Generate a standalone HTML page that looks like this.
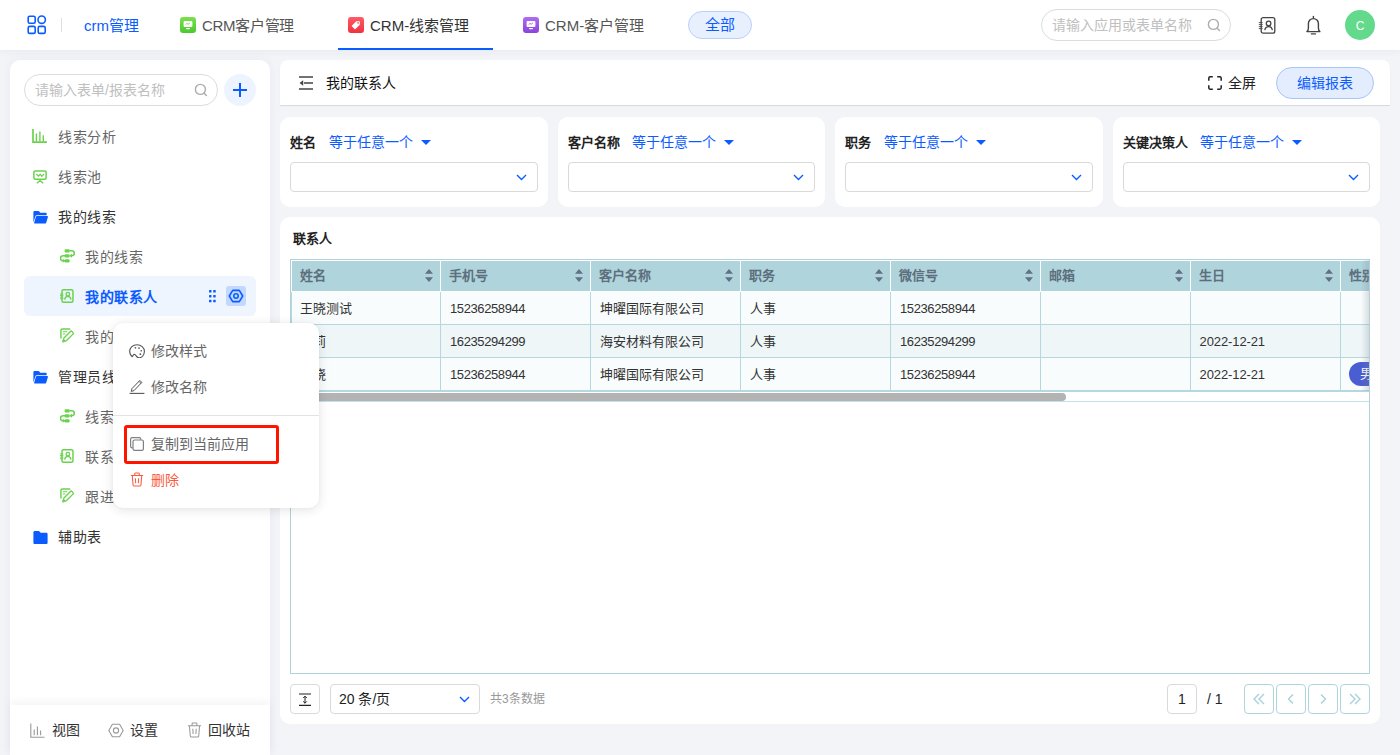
<!DOCTYPE html>
<html lang="zh-CN">
<head>
<meta charset="utf-8">
<title>CRM-线索管理</title>
<style>
*{box-sizing:border-box;margin:0;padding:0}
html,body{width:1400px;height:755px;overflow:hidden}
body{font-family:"Liberation Sans",sans-serif;font-size:14px;color:#333;background:#f2f4f8;position:relative}
.abs{position:absolute}
svg{display:block}
/* ---------- top bar ---------- */
#topbar{position:absolute;left:0;top:0;width:1400px;height:50px;background:#fff;box-shadow:0 1px 8px rgba(40,50,90,.06)}
#topbar .t{position:absolute;top:0;height:50px;line-height:51px;font-size:15px;white-space:nowrap}
.appico{position:absolute;top:17px;width:16px;height:16px;border-radius:3px}
/* ---------- sidebar ---------- */
#side{position:absolute;left:10px;top:60px;width:260px;height:695px;background:#fff;border-radius:10px 10px 0 0;box-shadow:0 0 10px rgba(60,70,120,.06)}
.nav{position:absolute;left:0;height:40px;line-height:40px;font-size:14px;letter-spacing:.55px;color:#666;white-space:nowrap}
.nav svg{position:absolute}
/* ---------- main ---------- */
.card{position:absolute;background:#fff;border-radius:10px}

/* header panel */
#hd{position:absolute;left:280px;top:60px;width:1110px;height:45px;background:#fff;border-radius:8px 8px 0 0;box-shadow:0 1px 1px rgba(0,0,0,.12)}
/* filter cards */
.fc{position:absolute;top:117px;width:267.500px;height:90px;background:#fff;border-radius:10px}
.fc .lb{position:absolute;left:10px;top:17px;height:18px;line-height:18px;font-size:13px;font-weight:bold;color:#222;white-space:nowrap}
.fc .op{position:absolute;top:16px;height:18px;line-height:18px;font-size:14px;color:#0b5cff;white-space:nowrap}
.fc .tri{position:absolute;top:23px;width:0;height:0;border-left:5px solid transparent;border-right:5px solid transparent;border-top:5.5px solid #0b5cff}
.fc .sel{position:absolute;left:10px;top:45px;width:247.500px;height:30px;border:1px solid #d9d9d9;border-radius:4px;background:#fff}
.fc .sel svg{position:absolute;right:10px;top:11px}
/* table */
#tp{position:absolute;left:280px;top:217px;width:1100px;height:507px;background:#fff;border-radius:10px;overflow:hidden}
#tw{position:absolute;left:10px;top:42px;width:1080px;height:415px;border:1px solid #afd2dc;overflow:hidden}
.th{position:absolute;top:1px;height:30px;width:149px;background:#afd4dc;color:#5d6f7c;font-size:13px;font-weight:bold;line-height:30px;padding-left:8px;white-space:nowrap}
.th svg{position:absolute;right:7px;top:8px}
.tr{position:absolute;left:0;width:1200px;height:33px;border-bottom:1px solid #b6d7df;border-left:1px solid #b6d7df}
.td{position:absolute;top:0;height:32px;width:150px;margin-left:-1px;border-right:1px solid #b6d7df;font-size:13px;color:#333;line-height:33px;padding-left:9px;white-space:nowrap;letter-spacing:-.4px}
.td.c{letter-spacing:0}
.pbtn{position:absolute;top:467px;width:30px;height:30px;border:1px solid #afd4dc;border-radius:4px;background:#fff}
.pbtn svg{position:absolute;left:7px;top:7px}
.pbtn.j svg{top:8px}

/* popup */
#pop{position:absolute;left:113px;top:323px;width:206px;height:185px;background:#fff;border-radius:10px;box-shadow:0 2px 12px rgba(0,0,0,.11),0 0 3px rgba(0,0,0,.04)}
#pop .mi{position:absolute;left:38px;height:36px;line-height:36px;font-size:14px;color:#666;white-space:nowrap}
#pop svg{position:absolute}
</style>
</head>
<body>


<!-- ================= TOP BAR ================= -->
<div id="topbar">
  <svg class="abs" style="left:27px;top:15px" width="20" height="20" viewBox="0 0 20 20" fill="none" stroke="#0b5cff" stroke-width="1.600">
    <rect x="1.200" y="1.200" width="7" height="7" rx="1.500"/><circle cx="14.700" cy="4.700" r="3.700"/>
    <rect x="1.200" y="11.400" width="7" height="7" rx="1.500"/><rect x="11.200" y="11.400" width="7" height="7" rx="1.500"/>
  </svg>
  <div class="abs" style="left:61px;top:18px;width:1px;height:14px;background:#dcdfe6"></div>
  <div class="t" style="left:84px;color:#0b5cff">crm管理</div>

  <div class="appico" style="left:180px;background:linear-gradient(180deg,#7be04e,#4cc92f)">
    <svg width="16" height="16" viewBox="0 0 16 16"><rect x="3.6" y="4" width="8.8" height="6" rx="1" fill="#fff"/><rect x="6" y="11" width="4" height="1.2" rx=".6" fill="#fff"/><path d="M5.6 7.6l1.4-1.2 1.2 .9 1.8-1.5" stroke="#5dd33a" stroke-width=".8" fill="none"/></svg>
  </div>
  <div class="t" style="left:202px;color:#555;letter-spacing:-.3px">CRM客户管理</div>

  <div class="appico" style="left:348px;background:linear-gradient(180deg,#ff5a66,#f0323f)">
    <svg width="16" height="16" viewBox="0 0 16 16"><path d="M8.3 4.2h3.5v3.5l-4.3 4.3a.7.7 0 0 1-1 0L4 9.5a.7.7 0 0 1 0-1z" fill="#fff"/><circle cx="10.1" cy="5.9" r=".8" fill="#f4404c"/></svg>
  </div>
  <div class="t" style="left:370px;color:#333">CRM-线索管理</div>
  <div class="abs" style="left:338px;top:48px;width:155px;height:2px;background:#0b5cff"></div>

  <div class="appico" style="left:523px;background:linear-gradient(180deg,#b06cf0,#8a43dd)">
    <svg width="16" height="16" viewBox="0 0 16 16"><rect x="3.6" y="4" width="8.8" height="6" rx="1" fill="#fff"/><rect x="6" y="11" width="4" height="1.2" rx=".6" fill="#fff"/><path d="M5.6 7.6l1.4-1.2 1.2 .9 1.8-1.5" stroke="#9a55e6" stroke-width=".8" fill="none"/></svg>
  </div>
  <div class="t" style="left:545px;color:#555">CRM-客户管理</div>

  <div class="abs" style="left:688px;top:11px;width:64px;height:28px;border-radius:14px;background:#e8f0fe;border:1px solid #b9d0fb;color:#0b5cff;font-size:15px;line-height:26px;text-align:center">全部</div>

  <div class="abs" style="left:1041px;top:9px;width:190px;height:32px;border-radius:16px;border:1px solid #dcdcdc;background:#fff;font-size:14px;line-height:30px;color:#c0c0c0;padding-left:10px;white-space:nowrap">请输入应用或表单名称</div>
  <svg class="abs" style="left:1206px;top:17px" width="16" height="16" viewBox="0 0 16 16" fill="none" stroke="#adadad" stroke-width="1.400"><circle cx="7.4" cy="7.4" r="5"/><path d="M11.2 11.2l2.2 2.2" stroke-linecap="round"/></svg>

  <svg class="abs" style="left:1258px;top:16px" width="19" height="19" viewBox="0 0 19 19" fill="none" stroke="#444" stroke-width="1.3"><rect x="3.2" y="1.6" width="13.6" height="15.6" rx="2"/><path d="M.8 6.600h3.800M.8 8.600h3.800M.8 10.600h3.800M.8 12.600h3.800" stroke-width=".9"/><circle cx="10.6" cy="7.4" r="2.3"/><path d="M6.8 14.2c.4-2.4 1.8-3.6 3.8-3.6s3.4 1.2 3.8 3.6"/></svg>

  <svg class="abs" style="left:1305px;top:15px" width="18" height="20" viewBox="0 0 18 20" fill="none" stroke="#444" stroke-width="1.400" stroke-linecap="round" stroke-linejoin="round"><path d="M8.400 1.500v1.200"/><path d="M1.900 16.600c1.200-.8 1.500-1.800 1.500-3.600V8.600a5 5 0 0 1 10 0V13c0 1.800 .3 2.800 1.500 3.600z"/><path d="M6.400 18.900h4"/></svg>

  <div class="abs" style="left:1345px;top:10px;width:30px;height:30px;border-radius:15px;background:#62d98b;color:#fff;font-size:12px;line-height:32px;text-align:center">C</div>
</div>

<!-- ================= SIDEBAR ================= -->
<div id="side">
  <div class="abs" style="left:14px;top:14px;width:194px;height:32px;border-radius:16px;border:1px solid #dcdcdc;font-size:14px;line-height:30px;color:#c0c0c0;padding-left:10px;white-space:nowrap">请输入表单/报表名称</div>
  <svg class="abs" style="left:183px;top:22px" width="16" height="16" viewBox="0 0 16 16" fill="none" stroke="#adadad" stroke-width="1.400"><circle cx="7.4" cy="7.4" r="5"/><path d="M11.2 11.2l2.2 2.2" stroke-linecap="round"/></svg>
  <div class="abs" style="left:214px;top:14px;width:32px;height:32px;border-radius:16px;background:#edf4ff"></div>
  <svg class="abs" style="left:222px;top:22px" width="16" height="16" viewBox="0 0 16 16" stroke="#0b5cff" stroke-width="2"><path d="M8 1v14M1 8h14"/></svg>

  <!-- nav items -->
  <div class="nav" style="top:57px;left:48px">线索分析</div>
  <svg class="abs" style="left:22px;top:69px" width="15" height="14" viewBox="0 0 15 14"><g fill="none" stroke="#6bd24f" stroke-width="1.700"><path d="M1 0v13.100h14"/><path d="M4.400 4.600v8M7.900 2.400v10.200M11.300 6.200v6.400" stroke-width="1.400"/></g></svg>
  <div class="nav" style="top:97px;left:48px">线索池</div>
  <svg class="abs" style="left:23px;top:109.5px" width="14" height="14" viewBox="0 0 14 14"><g fill="none" stroke="#6bd24f" stroke-width="1.500" stroke-linejoin="round"><rect x=".9" y=".9" width="12.200" height="8.400" rx="1.200"/><path d="M3.300 4l2.300 2.200 1.600-2 1.600 2.200 2.200-2.400" stroke-width="1.200"/><path d="M7 9.400v1.200M3.800 13.200L7 10.800l3.200 2.400" stroke-width="1.400"/></g></svg>
  <div class="nav" style="top:137px;left:48px;color:#333">我的线索</div>
  <svg class="abs" style="left:22.5px;top:150.5px" width="15" height="13" viewBox="0 0 15 13"><path d="M.4 1.100C.4 .5 .9 0 1.500 0h3.900c.4 0 .7 .2 .9 .5l.9 1.300h5.400c.6 0 1.100 .5 1.100 1.100v1.400H3.600c-.5 0-.9 .3-1.100 .8L.4 11.600z" fill="#0b5cff"/><path d="M3.900 5h10.300c.5 0 .9 .5 .7 1l-1.700 5.800c-.1 .4-.5 .7-.9 .7H1.500c-.3 0-.5-.3-.4-.6L2.900 5.800c.1-.5 .5-.8 1-.8z" fill="#0b5cff"/></svg>
  <div class="nav" style="top:177px;left:75px">我的线索</div>
  <svg class="abs" style="left:49.5px;top:189px" width="15" height="14" viewBox="0 0 15 14"><g fill="#6bd24f"><rect x="4.600" y=".2" width="5" height="3.200" rx=".9"/><rect x="4.600" y="5.200" width="5" height="3.200" rx=".9"/><rect x="4.600" y="10.200" width="5" height="3.200" rx=".9"/></g><g fill="none" stroke="#6bd24f" stroke-width="1.600" stroke-linecap="round"><path d="M9.800 1.800h2a2.500 2.500 0 0 1 0 5h-.8"/><path d="M4.400 6.800h-1.400a2.500 2.500 0 0 0 0 5h1.400"/></g><path d="M9.400 6.800l2.600-2v4z" fill="#6bd24f"/><path d="M5.400 11.800l-2.600-2v4z" fill="#6bd24f"/></svg>
  <div class="abs" style="left:14px;top:216px;width:232px;height:40px;border-radius:6px;background:#eef5ff"></div>
  <div class="nav" style="top:217px;left:75px;color:#0b5cff;font-weight:bold">我的联系人</div>
  <svg class="abs" style="left:50px;top:229.3px" width="14" height="14" viewBox="0 0 15 15"><g fill="none" stroke="#6bd24f" stroke-width="1.600"><rect x="2.100" y=".9" width="11.800" height="13.200" rx="1.600"/><path d="M0 5.300h3.600M0 7h3.600M0 8.700h3.600M0 10.400h3.600" stroke-width="1"/><circle cx="8.400" cy="5.600" r="1.900" stroke-width="1.400"/><path d="M5 11.400c.3-2.300 1.600-3.400 3.400-3.400s3.100 1.100 3.400 3.400" stroke-width="1.400"/></g></svg>
  <svg class="abs" style="left:198.500px;top:229.500px" width="8" height="13" viewBox="0 0 8 13" fill="#0b5cff"><rect x="0" y="0" width="2.500" height="2.500" rx=".6"/><rect x="4.200" y="0" width="2.500" height="2.500" rx=".6"/><rect x="0" y="4.900" width="2.500" height="2.500" rx=".6"/><rect x="4.200" y="4.900" width="2.500" height="2.500" rx=".6"/><rect x="0" y="9.800" width="2.500" height="2.500" rx=".6"/><rect x="4.200" y="9.800" width="2.500" height="2.500" rx=".6"/></svg>
  <div class="abs" style="left:216px;top:226px;width:20px;height:20px;border-radius:3px;background:#c2d8fe"></div>
  <svg class="abs" style="left:218px;top:229px" width="16" height="14" viewBox="0 0 16 14" fill="none" stroke="#0b5cff" stroke-width="1.600"><path d="M4.700 1.400h6.600l3.400 5.600-3.400 5.600H4.700L1.300 7z" stroke-linejoin="round"/><circle cx="8" cy="7" r="2.200"/></svg>
  <div class="nav" style="top:257px;left:75px">我的</div>
  <svg class="abs" style="left:49.5px;top:268.4px" width="14.5" height="14.5" viewBox="0 0 16 16"><g fill="none" stroke="#6bd24f" stroke-linejoin="round" stroke-linecap="round"><path d="M10.800 1H2.600C1.700 1 1 1.700 1 2.600V11" stroke-width="1.600"/><path d="M3.600 4.200h3.800M3.600 6.600h1.800" stroke-width="1.200"/><path d="M12.600 3.400l2 2c.3 .3 .3 .8 0 1.100l-7.400 7.400-3.600 1.300c-.3 .1-.6-.2-.5-.5l1.300-3.600 7.400-7.400c.3-.3 .5-.6 .8-.3z" stroke-width="1.500"/></g><path d="M3.200 15l.9-3 2.100 2.100z" fill="#6bd24f"/></svg>
  <div class="nav" style="top:297px;left:48px;color:#333">管理员线</div>
  <svg class="abs" style="left:22.5px;top:310.5px" width="15" height="13" viewBox="0 0 15 13"><path d="M.4 1.100C.4 .5 .9 0 1.500 0h3.900c.4 0 .7 .2 .9 .5l.9 1.300h5.400c.6 0 1.100 .5 1.100 1.100v1.400H3.600c-.5 0-.9 .3-1.100 .8L.4 11.600z" fill="#0b5cff"/><path d="M3.900 5h10.300c.5 0 .9 .5 .7 1l-1.700 5.800c-.1 .4-.5 .7-.9 .7H1.500c-.3 0-.5-.3-.4-.6L2.900 5.800c.1-.5 .5-.8 1-.8z" fill="#0b5cff"/></svg>
  <div class="nav" style="top:337px;left:75px">线索</div>
  <svg class="abs" style="left:49.5px;top:349px" width="15" height="14" viewBox="0 0 15 14"><g fill="#6bd24f"><rect x="4.600" y=".2" width="5" height="3.200" rx=".9"/><rect x="4.600" y="5.200" width="5" height="3.200" rx=".9"/><rect x="4.600" y="10.200" width="5" height="3.200" rx=".9"/></g><g fill="none" stroke="#6bd24f" stroke-width="1.600" stroke-linecap="round"><path d="M9.800 1.800h2a2.500 2.500 0 0 1 0 5h-.8"/><path d="M4.400 6.800h-1.400a2.500 2.500 0 0 0 0 5h1.400"/></g><path d="M9.400 6.800l2.600-2v4z" fill="#6bd24f"/><path d="M5.400 11.800l-2.600-2v4z" fill="#6bd24f"/></svg>
  <div class="nav" style="top:377px;left:75px">联系</div>
  <svg class="abs" style="left:50px;top:389.3px" width="14" height="14" viewBox="0 0 15 15"><g fill="none" stroke="#6bd24f" stroke-width="1.600"><rect x="2.100" y=".9" width="11.800" height="13.200" rx="1.600"/><path d="M0 5.300h3.600M0 7h3.600M0 8.700h3.600M0 10.400h3.600" stroke-width="1"/><circle cx="8.400" cy="5.600" r="1.900" stroke-width="1.400"/><path d="M5 11.400c.3-2.300 1.600-3.400 3.400-3.400s3.100 1.100 3.400 3.400" stroke-width="1.400"/></g></svg>
  <div class="nav" style="top:417px;left:75px">跟进</div>
  <svg class="abs" style="left:49.5px;top:428.4px" width="14.5" height="14.5" viewBox="0 0 16 16"><g fill="none" stroke="#6bd24f" stroke-linejoin="round" stroke-linecap="round"><path d="M10.800 1H2.600C1.700 1 1 1.700 1 2.600V11" stroke-width="1.600"/><path d="M3.600 4.200h3.800M3.600 6.600h1.800" stroke-width="1.200"/><path d="M12.600 3.400l2 2c.3 .3 .3 .8 0 1.100l-7.400 7.400-3.600 1.300c-.3 .1-.6-.2-.5-.5l1.300-3.600 7.400-7.400c.3-.3 .5-.6 .8-.3z" stroke-width="1.500"/></g><path d="M3.200 15l.9-3 2.100 2.100z" fill="#6bd24f"/></svg>
  <div class="nav" style="top:457px;left:48px;color:#333">辅助表</div>
  <svg class="abs" style="left:22.5px;top:470.5px" width="15" height="13" viewBox="0 0 15 13"><path d="M.4 1.300C.4 .6 1 0 1.700 0h3.900c.4 0 .8 .2 1 .5l1 1.300h5.700c.7 0 1.300 .6 1.300 1.300v8.600c0 .7-.6 1.300-1.300 1.300H1.700C1 13 .4 12.400 .4 11.700z" fill="#0b5cff"/></svg>

  <!-- bottom bar -->
  <div class="abs" style="left:0;top:645px;width:260px;height:50px;background:#fff;box-shadow:0 -3px 8px rgba(60,70,110,.06)"></div>
  <svg class="abs" style="left:20px;top:663px" width="15" height="15" viewBox="0 0 15 15" fill="none" stroke="#999" stroke-width="1.100"><path d="M.8 .5v13.700h13.700"/><path d="M4.200 6.500v5.700M7.400 3.500v8.700M10.600 7.500v4.700"/></svg>
  <div class="nav" style="top:650px;left:42px;color:#333;letter-spacing:0">视图</div>
  <svg class="abs" style="left:98px;top:663px" width="16" height="15" viewBox="0 0 16 15" fill="none" stroke="#999" stroke-width="1.100"><path d="M4.400 1.200h7.200L15.200 7.500l-3.600 6.300H4.400L.8 7.500z" stroke-linejoin="round"/><circle cx="8" cy="7.500" r="2.600"/></svg>
  <div class="nav" style="top:650px;left:120px;color:#333;letter-spacing:0">设置</div>
  <svg class="abs" style="left:176.500px;top:662px" width="15" height="16" viewBox="0 0 16 17" fill="none" stroke="#999" stroke-width="1.100"><path d="M1 4h14M5.400 3.800V2c0-.5 .4-.9 .9-.9h3.400c.5 0 .9 .4 .9 .9v1.800"/><path d="M2.600 4.200l.9 10.600c.1 .7 .6 1.200 1.300 1.200h6.400c.7 0 1.200-.5 1.300-1.200l.9-10.600"/><path d="M6.200 7.200l.3 5.600M9.800 7.200l-.3 5.600"/></svg>
  <div class="nav" style="top:650px;left:198px;color:#333;letter-spacing:0">回收站</div>
</div>

<!-- ================= MAIN ================= -->
<div id="hd">
  <svg class="abs" style="left:19px;top:16px" width="14" height="14" viewBox="0 0 14 14" fill="none" stroke="#444" stroke-width="1.500"><path d="M0 .9h14M5 7h9M0 13.100h14"/><path d="M4.200 4.300v5.400L.6 7z" fill="#444" stroke="none"/></svg>
  <div class="abs" style="left:46px;top:0;height:45px;line-height:46px;font-size:14px;color:#111;white-space:nowrap">我的联系人</div>
  <svg class="abs" style="left:928px;top:16px" width="14" height="14" viewBox="0 0 14 14" fill="none" stroke="#222" stroke-width="1.500"><path d="M.8 4.800V2.200C.8 1.400 1.400 .8 2.200 .8h2.600M9.200 .8h2.600c.8 0 1.400 .6 1.400 1.400v2.600M13.200 9.200v2.600c0 .8-.6 1.400-1.400 1.400H9.200M4.800 13.200H2.200c-.8 0-1.400-.6-1.400-1.400V9.200"/></svg>
  <div class="abs" style="left:948px;top:0;height:45px;line-height:46px;font-size:14px;color:#222;white-space:nowrap">全屏</div>
  <div class="abs" style="left:996px;top:7px;width:98px;height:32px;border-radius:16px;background:#e3edfe;border:1px solid #a8c5fa;color:#0b5cff;font-size:14px;line-height:30px;text-align:center">编辑报表</div>
</div>
<div class="fc" style="left:280px"><div class="lb">姓名</div><div class="op" style="left:49px">等于任意一个</div><div class="tri" style="left:141px"></div><div class="sel"><svg width="11" height="7" viewBox="0 0 11 7" fill="none" stroke="#0b5cff" stroke-width="1.4"><path d="M1 1l4.500 4.500L10 1"/></svg></div></div>
<div class="fc" style="left:557.500px"><div class="lb">客户名称</div><div class="op" style="left:74px">等于任意一个</div><div class="tri" style="left:166px"></div><div class="sel"><svg width="11" height="7" viewBox="0 0 11 7" fill="none" stroke="#0b5cff" stroke-width="1.4"><path d="M1 1l4.500 4.500L10 1"/></svg></div></div>
<div class="fc" style="left:835px"><div class="lb">职务</div><div class="op" style="left:49px">等于任意一个</div><div class="tri" style="left:141px"></div><div class="sel"><svg width="11" height="7" viewBox="0 0 11 7" fill="none" stroke="#0b5cff" stroke-width="1.4"><path d="M1 1l4.500 4.500L10 1"/></svg></div></div>
<div class="fc" style="left:1112.500px"><div class="lb">关键决策人</div><div class="op" style="left:87px">等于任意一个</div><div class="tri" style="left:179px"></div><div class="sel"><svg width="11" height="7" viewBox="0 0 11 7" fill="none" stroke="#0b5cff" stroke-width="1.4"><path d="M1 1l4.500 4.500L10 1"/></svg></div></div>

<div id="tp">
  <div class="abs" style="left:13px;top:12px;height:20px;line-height:20px;font-size:13px;font-weight:bold;color:#222">联系人</div>
  <div id="tw">
    <div class="th" style="left:1px;width:148px">姓名<svg width="8" height="13" viewBox="0 0 8 13" fill="#626f86"><path d="M4 0L8 4.800H0z"/><path d="M4 13L8 8.200H0z"/></svg></div><div class="th" style="left:150px">手机号<svg width="8" height="13" viewBox="0 0 8 13" fill="#626f86"><path d="M4 0L8 4.800H0z"/><path d="M4 13L8 8.200H0z"/></svg></div><div class="th" style="left:300px">客户名称<svg width="8" height="13" viewBox="0 0 8 13" fill="#626f86"><path d="M4 0L8 4.800H0z"/><path d="M4 13L8 8.200H0z"/></svg></div><div class="th" style="left:450px">职务<svg width="8" height="13" viewBox="0 0 8 13" fill="#626f86"><path d="M4 0L8 4.800H0z"/><path d="M4 13L8 8.200H0z"/></svg></div><div class="th" style="left:600px">微信号<svg width="8" height="13" viewBox="0 0 8 13" fill="#626f86"><path d="M4 0L8 4.800H0z"/><path d="M4 13L8 8.200H0z"/></svg></div><div class="th" style="left:750px">邮箱<svg width="8" height="13" viewBox="0 0 8 13" fill="#626f86"><path d="M4 0L8 4.800H0z"/><path d="M4 13L8 8.200H0z"/></svg></div><div class="th" style="left:900px">生日<svg width="8" height="13" viewBox="0 0 8 13" fill="#626f86"><path d="M4 0L8 4.800H0z"/><path d="M4 13L8 8.200H0z"/></svg></div><div class="th" style="left:1050px;width:60px">性别</div>
    <div class="tr" style="top:32px;background:#f9fcfc"><div class="td c" style="left:0px">王晓测试</div><div class="td" style="left:150px">15236258944</div><div class="td c" style="left:300px">坤曜国际有限公司</div><div class="td c" style="left:450px">人事</div><div class="td" style="left:600px">15236258944</div><div class="td c" style="left:750px"></div><div class="td c" style="left:900px"></div><div class="td c" style="left:1050px"></div></div><div class="tr" style="top:65px;background:#eef6f8"><div class="td c" style="left:0px">王莉</div><div class="td" style="left:150px">16235294299</div><div class="td c" style="left:300px">海安材料有限公司</div><div class="td c" style="left:450px">人事</div><div class="td" style="left:600px">16235294299</div><div class="td c" style="left:750px"></div><div class="td" style="left:900px;letter-spacing:-.1px;padding-left:8.500px">2022-12-21</div><div class="td c" style="left:1050px"></div></div><div class="tr" style="top:98px;background:#f9fcfc"><div class="td c" style="left:0px">王晓</div><div class="td" style="left:150px">15236258944</div><div class="td c" style="left:300px">坤曜国际有限公司</div><div class="td c" style="left:450px">人事</div><div class="td" style="left:600px">15236258944</div><div class="td c" style="left:750px"></div><div class="td" style="left:900px;letter-spacing:-.1px;padding-left:8.500px">2022-12-21</div><div class="td c" style="left:1050px"><span style="position:absolute;left:8px;top:4px;width:60px;height:24px;border-radius:12px;background:#4a5dd3;color:#fff;line-height:24px;padding-left:11px">男</span></div></div>
    <div class="abs" style="left:0;top:130px;width:1080px;height:2px;background:#b6d7df"></div>
    <div class="abs" style="left:0;top:133px;width:775px;height:8px;background:#b3b3b3;border-radius:0 4px 4px 0"></div>
    <div class="abs" style="left:0;top:141px;width:1080px;height:1px;background:#c5e0e6"></div>
    <div class="abs" style="left:1070px;top:0;width:9px;height:131px;background:linear-gradient(90deg,rgba(120,130,140,0),rgba(120,130,140,.28))"></div>
  </div>
  <div class="pbtn j" style="left:10px;border-color:#d9d9d9"><svg width="14" height="14" viewBox="0 0 14 14" fill="none" stroke="#222" stroke-width="1"><path d="M1 1h12M1 12.400h12" stroke-width="1.100"/><path d="M7 3.200v7M5.200 5L7 3.200 8.800 5M5.200 8.400L7 10.200l1.800-1.800"/></svg></div>
  <div class="abs" style="left:50px;top:467px;width:150px;height:30px;border:1px solid #d9d9d9;border-radius:4px;font-size:14px;line-height:28px;padding-left:8px;color:#222;white-space:nowrap">20 条/页<svg style="position:absolute;right:9px;top:11px" width="11" height="7" viewBox="0 0 11 7" fill="none" stroke="#0b5cff" stroke-width="1.400"><path d="M1 1l4.500 4.500L10 1"/></svg></div>
  <div class="abs" style="left:210px;top:467px;height:30px;line-height:30px;font-size:12px;color:#999;white-space:nowrap">共3条数据</div>
  <div class="abs" style="left:887px;top:467px;width:30px;height:30px;border:1px solid #d9d9d9;border-radius:4px;font-size:14px;line-height:28px;text-align:center;color:#222">1</div>
  <div class="abs" style="left:927px;top:467px;height:30px;line-height:30px;font-size:14px;color:#222;white-space:nowrap">/ 1</div>
  <div class="pbtn" style="left:964px"><svg width="14" height="14" viewBox="0 0 14 14" fill="none" stroke="#a9d0d9" stroke-width="1.400"><path d="M7 2L2 7l5 5M12 2L7 7l5 5"/></svg></div>
  <div class="pbtn" style="left:996px"><svg width="14" height="14" viewBox="0 0 14 14" fill="none" stroke="#a9d0d9" stroke-width="1.400"><path d="M9 2.500L4.500 7 9 11.500"/></svg></div>
  <div class="pbtn" style="left:1028px"><svg width="14" height="14" viewBox="0 0 14 14" fill="none" stroke="#a9d0d9" stroke-width="1.400"><path d="M5 2.500L9.500 7 5 11.500"/></svg></div>
  <div class="pbtn" style="left:1060px"><svg width="14" height="14" viewBox="0 0 14 14" fill="none" stroke="#a9d0d9" stroke-width="1.400"><path d="M2 2l5 5-5 5M7 2l5 5-5 5"/></svg></div>
</div>

<!-- ================= POPUP ================= -->
<div id="pop">
  <svg style="left:16px;top:20.500px" width="16" height="14.500" preserveAspectRatio="none" viewBox="0 0 16 15" fill="none" stroke="#555" stroke-width="1.100" stroke-linejoin="round"><path d="M3.300 13.200C1.600 12 .7 10 .7 7.600 .7 3.600 4 .7 8 .7s7.400 2.900 7.400 6.900c0 3.800-2.600 6.700-5.200 6.700-1.800 0-2.400-1-3.100-2.100-.5-.8-1-1.500-1.700-1.500-.9 0-1.300 .6-1.600 1.500-.2 .6-.3 1-.5 1z"/><g fill="#555" stroke="none"><circle cx="6.400" cy="4" r=".85"/><circle cx="10" cy="4.300" r=".85"/><circle cx="12.200" cy="7.100" r=".85"/><circle cx="11.400" cy="10.500" r=".9"/></g></svg>
  <div class="mi" style="top:10px">修改样式</div>
  <svg style="left:16px;top:55px" width="16" height="16" viewBox="0 0 16 16" fill="none" stroke="#555" stroke-width="1" stroke-linejoin="round"><path d="M3 10.600L10.800 2.400l2 2L5 12.600l-2.800 .8z"/><path d="M10 3.400l2 2" /><path d="M.6 15.400h14.800" stroke-width="1.100"/></svg>
  <div class="mi" style="top:46px">修改名称</div>
  <div style="position:absolute;left:0;top:92px;width:206px;height:1px;background:#e3e3e3"></div>
  <div style="position:absolute;left:11px;top:102px;width:155px;height:39px;border:3px solid #ff1400;border-radius:3px"></div>
  <svg style="left:17px;top:114px" width="14" height="14" viewBox="0 0 14 14" fill="none" stroke="#808080" stroke-width="1.200"><rect x="3" y="3" width="10.400" height="10.400" rx="1.600"/><path d="M10.800 2.800V2.200c0-.9-.7-1.600-1.600-1.600H2.200C1.300 .6 .6 1.300 .6 2.200v7c0 .9 .7 1.600 1.600 1.600h.6"/></svg>
  <div class="mi" style="top:103px">复制到当前应用</div>
  <svg style="left:17px;top:149px" width="14" height="15" viewBox="0 0 16 17" fill="none" stroke="#fb5a3c" stroke-width="1.200"><path d="M1 4h14M5.400 3.800V2c0-.5 .4-.9 .9-.9h3.400c.5 0 .9 .4 .9 .9v1.800"/><path d="M2.600 4.200l.9 10.600c.1 .7 .6 1.200 1.300 1.200h6.400c.7 0 1.200-.5 1.300-1.200l.9-10.600"/><path d="M6.200 7.200l.3 5.600M9.800 7.200l-.3 5.600"/></svg>
  <div class="mi" style="top:139px;color:#fb5a3c">删除</div>
</div>

</body>
</html>
